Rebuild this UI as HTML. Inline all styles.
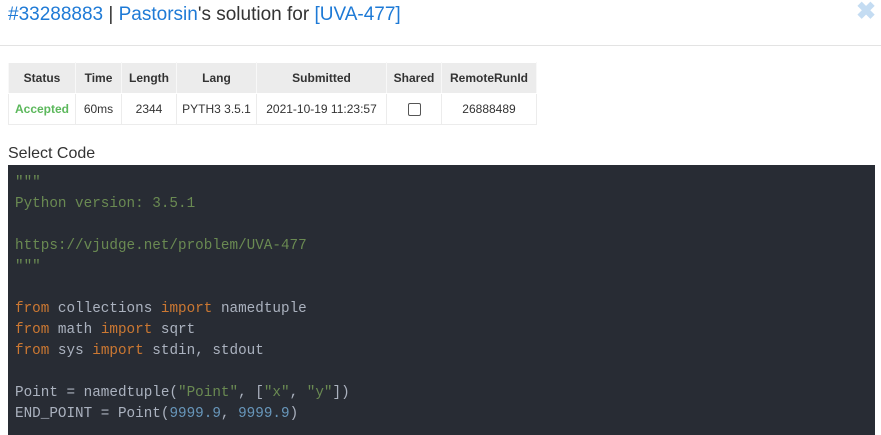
<!DOCTYPE html>
<html><head><style>
body{margin:0;width:881px;height:419px;overflow:hidden;background:#fff;font-family:"Liberation Sans",sans-serif;color:#333}
.title{position:absolute;left:8px;top:2px;font-size:19px;line-height:26px;color:#333}
.title a{color:#1e7ad6;text-decoration:none}
.x{position:absolute;left:856px;top:0px;font-size:24px;font-weight:bold;color:#c4dcf2;line-height:24px}
.hr{position:absolute;left:0;right:0;top:45px;border-top:1px solid #e3e3e3}
table{position:absolute;left:8px;top:62px;border-collapse:collapse;font-size:12px}
td,th{border:1px solid #ececec;text-align:center;padding:0 5px;height:30px;white-space:nowrap}
th{background:#ececec;border-color:#fff #f8f8f8;font-weight:bold;color:#333;height:30px}
.ac{color:#5cb85c;font-weight:bold}
.cb{display:inline-block;width:11px;height:11px;border:1px solid #555;border-radius:2px;vertical-align:middle}
.sel{position:absolute;left:8px;top:145px;font-size:16px;color:#333}
pre{position:absolute;left:8px;top:165px;width:867px;height:270px;margin:0;background:#282c34;color:#abb2bf;font-family:"Liberation Mono",monospace;font-size:14.3px;line-height:21px;padding:8px 7px;box-sizing:border-box}
.c{color:#6a8a52}.k{color:#cc7832}.s{color:#6a8a52}.n{color:#6897bb}
</style></head><body>
<div class="title"><a>#33288883</a> | <a>Pastorsin</a>'s solution for <a>[UVA-477]</a></div>
<div class="x">✖</div>
<div class="hr"></div>
<table>
<tr><th style="width:56px">Status</th><th style="width:35px">Time</th><th style="width:44px">Length</th><th style="width:69px">Lang</th><th style="width:119px">Submitted</th><th style="width:44px">Shared</th><th style="width:84px">RemoteRunId</th></tr>
<tr><td class="ac">Accepted</td><td>60ms</td><td>2344</td><td>PYTH3 3.5.1</td><td>2021-10-19 11:23:57</td><td><span class="cb"></span></td><td>26888489</td></tr>
</table>
<div class="sel">Select Code</div>
<pre><span class="c">"""
Python version: 3.5.1

https://vjudge.net/problem/UVA-477
"""</span>

<span class="k">from</span> collections <span class="k">import</span> namedtuple
<span class="k">from</span> math <span class="k">import</span> sqrt
<span class="k">from</span> sys <span class="k">import</span> stdin, stdout

Point = namedtuple(<span class="s">"Point"</span>, [<span class="s">"x"</span>, <span class="s">"y"</span>])
END_POINT = Point(<span class="n">9999.9</span>, <span class="n">9999.9</span>)</pre>
</body></html>
